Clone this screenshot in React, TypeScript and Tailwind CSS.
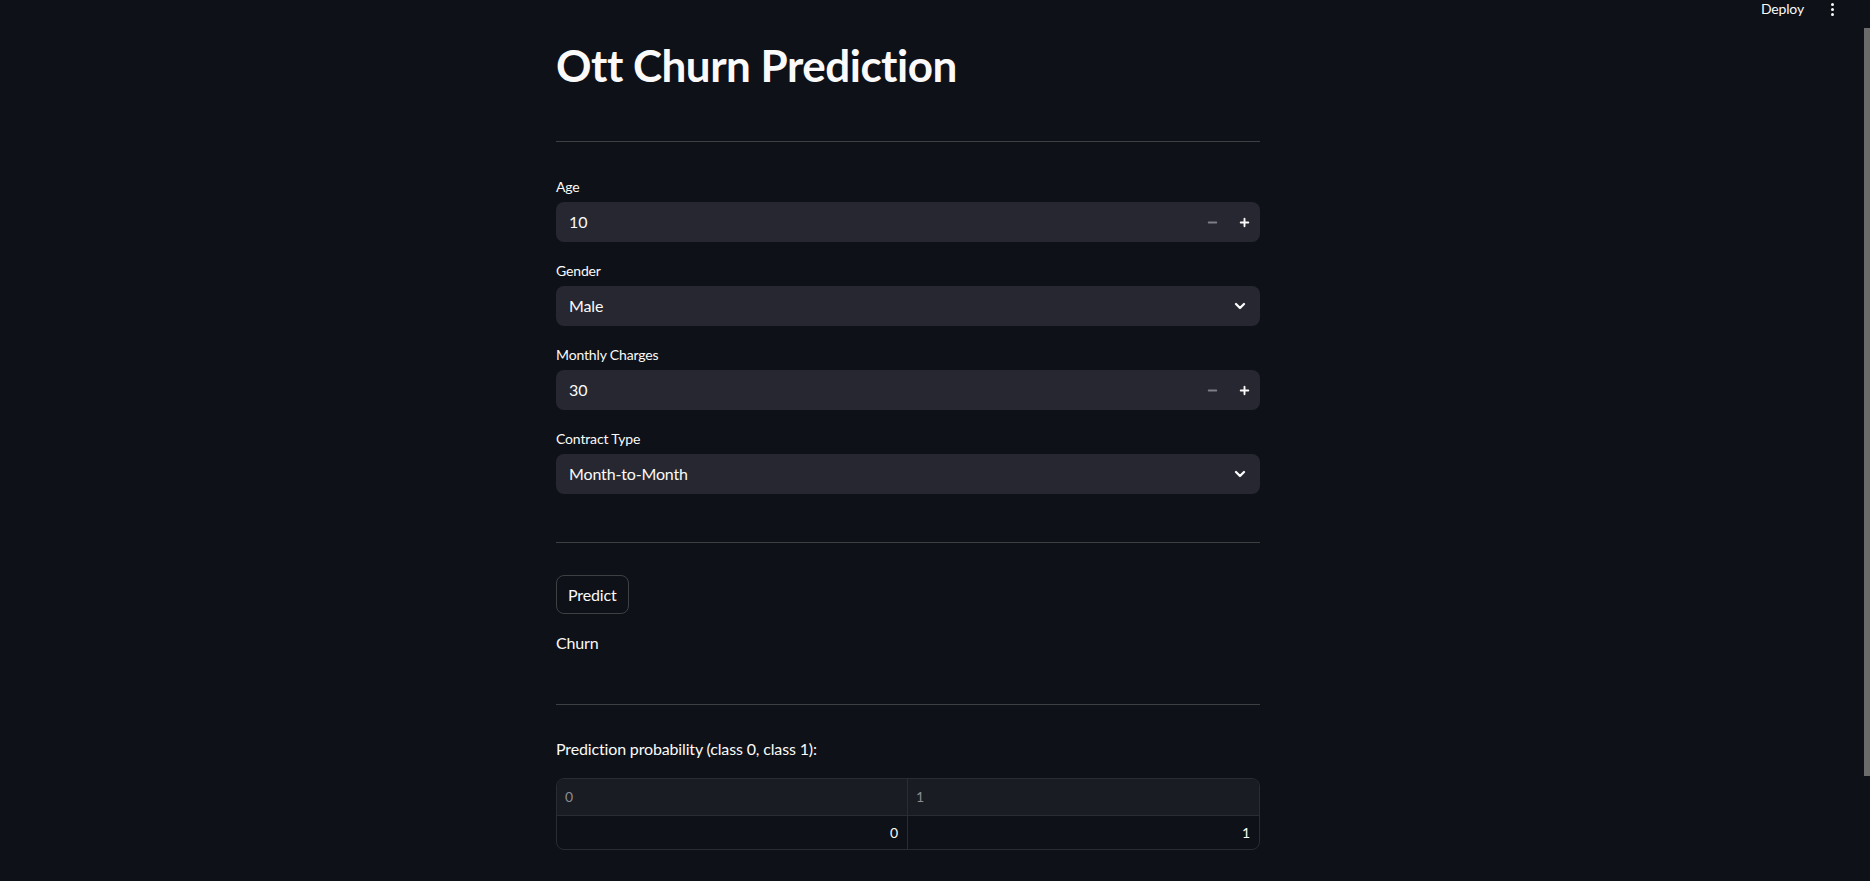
import { ChevronDown, Minus, Plus } from "lucide-react"

const font = { fontFamily: 'Lato, "Noto Sans", sans-serif' }

function Label({ children }: { children: React.ReactNode }) {
  return <div className="h-[21px] text-sm leading-[21px] text-[#fafafa]">{children}</div>
}

function NumberField({ label, value }: { label: string; value: string }) {
  return (
    <div>
      <Label>{label}</Label>
      <div className="mt-[5px] flex h-[40px] items-center rounded-lg bg-[#262730] pl-[13px] pr-[9px]">
        <span className="flex-1 text-base text-[#fafafa]">{value}</span>
        <Minus size={13} strokeWidth={3.5} className="mr-[19px] text-[#7d7f87]" />
        <Plus size={13} strokeWidth={3.5} className="text-[#fafafa]" />
      </div>
    </div>
  )
}

function SelectField({ label, value }: { label: string; value: string }) {
  return (
    <div>
      <Label>{label}</Label>
      <div className="mt-[5px] flex h-[40px] items-center rounded-lg bg-[#262730] pl-[13px] pr-[12px]">
        <span className="flex-1 text-base text-[#fafafa]">{value}</span>
        <ChevronDown size={16} strokeWidth={3.5} className="text-[#fafafa]" />
      </div>
    </div>
  )
}

export default function App() {
  return (
    <div className="relative min-h-screen bg-[#0e1117] tracking-[-0.15px]" style={font}>
      <div className="flex h-[18px] items-center justify-end gap-[27px] pr-[36px] text-sm text-[#fafafa]">
        <span>Deploy</span>
        <span className="flex flex-col gap-[2px]">
          <span className="h-[3px] w-[3px] rounded-full bg-[#fafafa]" />
          <span className="h-[3px] w-[3px] rounded-full bg-[#fafafa]" />
          <span className="h-[3px] w-[3px] rounded-full bg-[#fafafa]" />
        </span>
      </div>

      <div className="pr-[54px]">
        <div className="mx-auto w-[704px]">
          <h1 className="mt-[21px] text-[44px] font-bold leading-[52px] tracking-[-0.5px] text-[#fafafa]">
            Ott Churn Prediction
          </h1>
          <hr className="mt-[50px] border-0 border-t border-[#3e4044]" />

          <div className="mt-[34px] flex flex-col gap-[18px]">
            <NumberField label="Age" value="10" />
            <SelectField label="Gender" value="Male" />
            <NumberField label="Monthly Charges" value="30" />
            <SelectField label="Contract Type" value="Month-to-Month" />
          </div>

          <hr className="mt-[48px] border-0 border-t border-[#3e4044]" />

          <button className="mt-[32px] h-[39px] rounded-lg border border-[#3e4044] px-[11px] text-base text-[#fafafa]">
            Predict
          </button>
          <p className="mt-[17px] text-base leading-6 text-[#fafafa]">Churn</p>

          <hr className="mt-[49px] border-0 border-t border-[#3e4044]" />

          <p className="mt-[32px] text-base leading-6 text-[#fafafa]">Prediction probability (class 0, class 1):</p>

          <div className="mt-[17px] overflow-hidden rounded-lg border border-[#2a2c33]">
            <div className="grid h-[36px] grid-cols-2 bg-[#1a1c23] text-sm text-[#8b8d93]">
              <div className="flex items-center border-r border-[#2a2c33] pl-[8px]">0</div>
              <div className="flex items-center pl-[8px]">1</div>
            </div>
            <div className="grid h-[34px] grid-cols-2 border-t border-[#2a2c33] text-sm text-[#fafafa]">
              <div className="flex items-center justify-end border-r border-[#2a2c33] pr-[9px]">0</div>
              <div className="flex items-center justify-end pr-[9px]">1</div>
            </div>
          </div>
        </div>
      </div>

      <div className="absolute right-0 top-[28px] h-[748px] w-[6px] bg-[#6b6b6b]" />
    </div>
  )
}
